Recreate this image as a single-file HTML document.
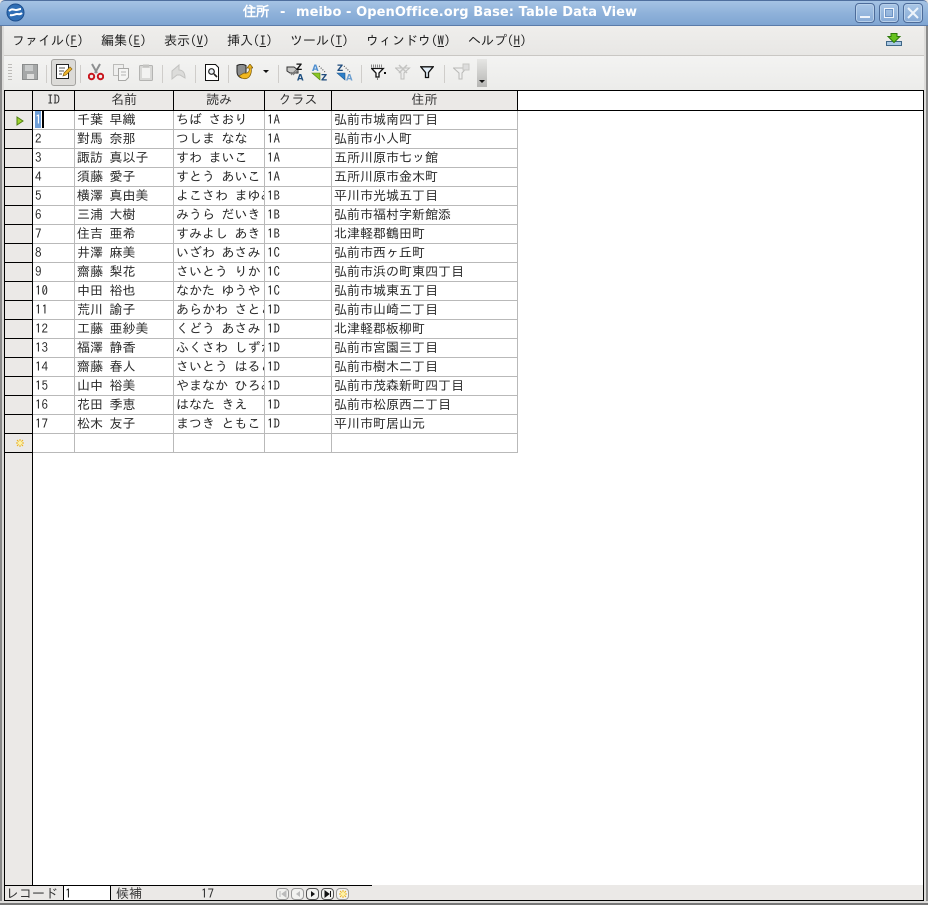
<!DOCTYPE html>
<html lang="ja"><head><meta charset="utf-8"><title>住所 - meibo</title>
<style>
html,body{margin:0;padding:0;width:928px;height:905px;overflow:hidden;background:#ebe9e7}
*{box-sizing:border-box}
body{position:relative;font:13px/19px "IPAGothic","Liberation Mono",monospace;color:#222}
.a{position:absolute}
#tb{left:0;top:0;width:928px;height:26px;background:linear-gradient(#a5c3e4,#8fb2da 50%,#7fa5d2);border-top:1px solid #4f6f9e;border-bottom:1px solid #5a7ba9;border-radius:5px 5px 0 0}
.ti{top:4px;color:#fff;font:bold 13px/17px "DejaVu Sans",sans-serif;white-space:pre;letter-spacing:.08px}
.wb{top:3px;width:20px;height:20px;border:1px solid #4d6c9a;border-radius:4px;background:linear-gradient(#a9c6e6,#86aad6);box-shadow:inset 0 0 0 1px #b8d0ea}
#menu{left:0;top:26px;width:928px;height:30px;background:linear-gradient(#efeeec,#e8e7e5);border-bottom:1px solid #c9c7c4}
.m{top:6px;white-space:pre;color:#222;line-height:18px}
.m u{text-decoration:underline;text-underline-offset:1px}
#tool{left:0;top:56px;width:928px;height:34px;background:linear-gradient(#f3f3f2,#ececea)}
.sep{top:9px;width:1px;height:18px;background:#cfcdca}
#grid{left:4px;top:90px;width:920px;height:811px;border:1px solid #000;background:#fff}
.h{top:91px;height:20px;background:#ebe9e7;border-right:1px solid #000;border-bottom:1px solid #000;text-align:center;line-height:18px;color:#333}
.rh{left:5px;width:28px;height:19px;background:#ebe9e7;border-right:1px solid #000;border-bottom:1px solid #000}
.c{height:19px;border-right:1px solid #b9b9b9;border-bottom:1px solid #b9b9b9;overflow:hidden;white-space:pre;padding-left:2px;line-height:18px;color:#2a2a2a}
.x1{left:33px;width:42px}.x2{left:75px;width:99px}.x3{left:174px;width:91px}.x4{left:265px;width:67px}.x5{left:332px;width:186px}
#sb{left:5px;top:885px;width:918px;height:15px;background:#ebe9e7}
.nb{top:888px;width:13px;height:12px;border:1px solid #9a9a9a;border-radius:4px;background:#f2f2f0}
</style></head><body>

<div class="a" id="tb"></div>
<svg class="a" style="left:6px;top:3px" width="19" height="19" viewBox="0 0 19 19"><circle cx="9.500" cy="9.500" r="8.500" fill="#2f6eb5" stroke="#1d4f8e"/><path d="M3 8c3-3 5-1 7-1s3-1 5-1M4 12c3 1 5-1 7-1s3 1 5-1" stroke="#fff" stroke-width="2" fill="none"/></svg>
<div class="a ti" style="left:243px">住所</div>
<div class="a ti" style="left:280px">-</div>
<div class="a ti" style="left:296px">meibo - OpenOffice.org Base: Table Data View</div>
<div class="a wb" style="left:855px"><div class="a" style="left:4px;top:12px;width:10px;height:2px;background:#eef4fb"></div></div>
<div class="a wb" style="left:879px"><div class="a" style="left:4px;top:4px;width:10px;height:10px;border:1px solid #eef4fb;box-shadow:inset 0 0 0 1px #6d93c4"></div></div>
<div class="a wb" style="left:903px"><svg class="a" style="left:3px;top:3px" width="12" height="12"><path d="M1 1l10 10M11 1L1 11" stroke="#eef4fb" stroke-width="2"/></svg></div>

<div class="a" id="menu"></div>
<div class="a m" style="left:12px;top:32px">ファイル(<u>F</u>)</div>
<div class="a m" style="left:101px;top:32px">編集(<u>E</u>)</div>
<div class="a m" style="left:164px;top:32px">表示(<u>V</u>)</div>
<div class="a m" style="left:227px;top:32px">挿入(<u>I</u>)</div>
<div class="a m" style="left:290px;top:32px">ツール(<u>T</u>)</div>
<div class="a m" style="left:366px;top:32px">ウィンドウ(<u>W</u>)</div>
<div class="a m" style="left:468px;top:32px">ヘルプ(<u>H</u>)</div>
<svg class="a" style="left:886px;top:33px" width="17" height="14" viewBox="0 0 17 14"><rect x="0.500" y="8.500" width="15" height="4" fill="#a9c8e4" stroke="#3f6686"/><path d="M5 0.500h6v3h3l-6 6-6-6h3z" fill="#66c21e" stroke="#2f7a0c"/></svg>

<div class="a" id="tool"></div>
<div class="a" style="left:8px;top:64px;width:4px;height:18px;background:repeating-linear-gradient(#bdbbb8 0 1px,transparent 1px 3px)"></div>
<svg class="a" style="left:22px;top:64px" width="16" height="17" viewBox="0 0 16 17"><rect x="0.500" y="0.500" width="15" height="15" fill="#a6a8a8" stroke="#8a8c8c"/><rect x="3" y="1" width="8" height="6" fill="#c9cbcb"/><rect x="5" y="10" width="7" height="5" fill="#dededd"/></svg>
<div class="a sep" style="left:46px;top:65px"></div>
<div class="a" style="left:51px;top:59px;width:25px;height:27px;border:1px solid #a4a3a0;border-radius:3px;background:#dcdbd8"></div>
<svg class="a" style="left:55px;top:63px" width="18" height="18" viewBox="0 0 18 18"><rect x="1.500" y="1.500" width="12" height="14" fill="#fff" stroke="#222"/><path d="M4 5h6M4 8h5M4 11h3" stroke="#555"/><path d="M8 13l1-3 6-6 2 2-6 6z" fill="#f0b62c" stroke="#8a6410" stroke-width=".7"/></svg>
<div class="a sep" style="left:80px;top:65px"></div>
<svg class="a" style="left:88px;top:63px" width="16" height="18" viewBox="0 0 16 18"><path d="M4 1l5 9M12 1L7 10" stroke="#8d8f90" stroke-width="2"/><circle cx="3.500" cy="13.500" r="2.700" fill="none" stroke="#c8161d" stroke-width="2"/><circle cx="12.500" cy="13.500" r="2.700" fill="none" stroke="#c8161d" stroke-width="2"/></svg>
<svg class="a" style="left:113px;top:64px" width="17" height="17" viewBox="0 0 17 17"><rect x="0.500" y="0.500" width="10" height="11" fill="#efefee" stroke="#bcbcba"/><path d="M5.500 4.500h10v9l-3 3h-7z" fill="#f5f5f4" stroke="#a8a8a6"/><path d="M8 8h5M8 11h5" stroke="#b5b5b3"/></svg>
<svg class="a" style="left:139px;top:64px" width="14" height="17" viewBox="0 0 14 17"><rect x="0.500" y="1.500" width="13" height="15" rx="1" fill="#d8d8d6" stroke="#b4b4b2"/><rect x="3" y="4" width="8" height="10" fill="#f2f2f1"/><rect x="4" y="0.500" width="6" height="3" fill="#c4c4c2"/></svg>
<div class="a sep" style="left:162px;top:65px"></div>
<svg class="a" style="left:170px;top:64px" width="17" height="17" viewBox="0 0 17 17"><path d="M9 1L2 7v8l5-4h3l5 3c0-6-3-8-6-8z" fill="#dcdcda" stroke="#c2c2c0"/></svg>
<div class="a sep" style="left:195px;top:65px"></div>
<svg class="a" style="left:205px;top:64px" width="14" height="17" viewBox="0 0 14 17"><path d="M0.500 0.500h10l3 3v13H0.500z" fill="#fff" stroke="#111"/><circle cx="6.500" cy="7.500" r="2.800" fill="#e8eef4" stroke="#222" stroke-width="1.200"/><path d="M9 10l3 3" stroke="#222" stroke-width="1.600"/></svg>
<div class="a sep" style="left:228px;top:65px"></div>
<svg class="a" style="left:236px;top:64px" width="17" height="16" viewBox="0 0 17 16"><path d="M1 1.500C4 0 7 0 10 1.500V8c0 3-2 5-4.500 6C3 13 1 11 1 8z" fill="#8b8d8e" stroke="#222"/><path d="M3 12c4 4 8 3 10 1s3-6 2-9l2 0-3-4-3 4h2c1 3-1 6-5 5z" fill="#f0b71f" stroke="#7d5b08" stroke-width=".7"/></svg>
<svg class="a" style="left:263px;top:70px" width="6" height="3"><path d="M0 0h6L3 3z" fill="#111"/></svg>
<div class="a sep" style="left:278px;top:65px"></div>
<svg class="a" style="left:286px;top:63px" width="18" height="18" viewBox="0 0 18 18"><path d="M1 4h7l4 3v3H4L1 8z" fill="#c7c7c5" stroke="#333"/><path d="M5 12l6-6M7 12l5-5" stroke="#777"/><text x="10" y="7" font-family="DejaVu Sans" font-weight="bold" font-size="8.500" fill="#111">Z</text><text x="11" y="17.500" font-family="DejaVu Sans" font-weight="bold" font-size="8.500" fill="#1f4f80">A</text></svg>
<svg class="a" style="left:311px;top:63px" width="18" height="18" viewBox="0 0 18 18"><text x="1" y="8" font-family="DejaVu Sans" font-weight="bold" font-size="8.500" fill="#4f8fd0">A</text><path d="M1 10l8 7V10z" fill="#8bc726" stroke="#4d7f10" stroke-width=".6"/><path d="M8 3l6 6" stroke="#444" stroke-dasharray="1 1.500"/><text x="10" y="17.500" font-family="DejaVu Sans" font-weight="bold" font-size="8.500" fill="#1f4b7c">Z</text></svg>
<svg class="a" style="left:336px;top:63px" width="18" height="18" viewBox="0 0 18 18"><text x="1" y="8" font-family="DejaVu Sans" font-weight="bold" font-size="8.500" fill="#1f4b7c">Z</text><path d="M1 10l8 7V10z" fill="#2d7fc9" stroke="#1a558c" stroke-width=".6"/><path d="M8 3l6 6" stroke="#444" stroke-dasharray="1 1.500"/><text x="10" y="17.500" font-family="DejaVu Sans" font-weight="bold" font-size="8.500" fill="#6c9fd0">A</text></svg>
<div class="a sep" style="left:361px;top:65px"></div>
<svg class="a" style="left:371px;top:63px" width="15" height="17" viewBox="0 0 15 17"><path d="M0 3h12" stroke="#888" stroke-width="3" stroke-dasharray="1 1"/><path d="M0.700 5.500h11.600L8 10v4H5v-4z" fill="#fff" stroke="#111" stroke-width="1.300"/><path d="M6 16h1" stroke="#111"/><rect x="13" y="9" width="2" height="2" fill="#111"/></svg>
<svg class="a" style="left:395px;top:63px" width="16" height="18" viewBox="0 0 16 18"><path d="M0.500 5h14L9 10v6H6v-6z" fill="#ededec" stroke="#bdbdbb"/><path d="M4 2l8 8M12 2L4 10" stroke="#c4c4c2" stroke-width="1.500"/></svg>
<svg class="a" style="left:420px;top:66px" width="14" height="13" viewBox="0 0 14 13"><path d="M0.800 0.800h12.400L8.500 6.500v5h-3v-5z" fill="#e4eff8" stroke="#111" stroke-width="1.300"/></svg>
<div class="a sep" style="left:444px;top:65px"></div>
<svg class="a" style="left:453px;top:63px" width="17" height="18" viewBox="0 0 17 18"><path d="M0.500 5h13L9 10v6H6v-6z" fill="#f0f0ef" stroke="#b9b9b7"/><rect x="10" y="1" width="6" height="6" fill="#ddd" stroke="#c6c6c4"/></svg>
<div class="a" style="left:477px;top:59px;width:10px;height:28px;background:linear-gradient(#e6e6e4,#b6b6b4)"></div>
<svg class="a" style="left:479px;top:80px" width="6" height="3"><path d="M0 0h6L3 3z" fill="#111"/></svg>

<div class="a" id="grid"></div>
<div class="a h" style="left:5px;width:28px"></div>
<div class="a h x1">ID</div><div class="a h x2">名前</div><div class="a h x3">読み</div><div class="a h x4">クラス</div><div class="a h x5">住所</div>
<div class="a" style="left:518px;top:110px;width:405px;height:1px;background:#000"></div>
<div class="a" style="left:32px;top:111px;width:1px;height:774px;background:#000"></div>
<div class="a" style="left:5px;top:453px;width:27px;height:432px;background:#ebe9e7"></div>

<div class="a rh" style="top:111px"></div><div class="a rh" style="top:130px"></div><div class="a rh" style="top:149px"></div><div class="a rh" style="top:168px"></div><div class="a rh" style="top:187px"></div><div class="a rh" style="top:206px"></div><div class="a rh" style="top:225px"></div><div class="a rh" style="top:244px"></div><div class="a rh" style="top:263px"></div><div class="a rh" style="top:282px"></div><div class="a rh" style="top:301px"></div><div class="a rh" style="top:320px"></div><div class="a rh" style="top:339px"></div><div class="a rh" style="top:358px"></div><div class="a rh" style="top:377px"></div><div class="a rh" style="top:396px"></div><div class="a rh" style="top:415px"></div><div class="a rh" style="top:434px"></div>
<svg class="a" style="left:16px;top:116px" width="8" height="10"><path d="M1 1l6 4-6 4z" fill="#9fd42e" stroke="#4f7f10"/></svg>
<svg class="a" style="left:16px;top:439px" width="8" height="8" viewBox="0 0 8 8"><path d="M4 0v8M0 4h8M1 1l6 6M7 1L1 7" stroke="#eeb211"/><circle cx="4" cy="4" r="2" fill="#fff3a0"/></svg>

<div class="a c x1" style="top:111px"><span style="background:#6f9fd8;color:#fff;display:inline-block;width:6px;height:17px">1</span><span style="display:inline-block;width:2px;height:17px;background:#000;vertical-align:top;margin-left:1px"></span></div><div class="a c x2" style="top:111px">千葉 早織</div><div class="a c x3" style="top:111px">ちば さおり</div><div class="a c x4" style="top:111px">1A</div><div class="a c x5" style="top:111px">弘前市城南四丁目</div>
<div class="a c x1" style="top:130px">2</div><div class="a c x2" style="top:130px">對馬 奈那</div><div class="a c x3" style="top:130px">つしま なな</div><div class="a c x4" style="top:130px">1A</div><div class="a c x5" style="top:130px">弘前市小人町</div>
<div class="a c x1" style="top:149px">3</div><div class="a c x2" style="top:149px">諏訪 真以子</div><div class="a c x3" style="top:149px">すわ まいこ</div><div class="a c x4" style="top:149px">1A</div><div class="a c x5" style="top:149px">五所川原市七ッ館</div>
<div class="a c x1" style="top:168px">4</div><div class="a c x2" style="top:168px">須藤 愛子</div><div class="a c x3" style="top:168px">すとう あいこ</div><div class="a c x4" style="top:168px">1A</div><div class="a c x5" style="top:168px">五所川原市金木町</div>
<div class="a c x1" style="top:187px">5</div><div class="a c x2" style="top:187px">横澤 真由美</div><div class="a c x3" style="top:187px">よこさわ まゆみ</div><div class="a c x4" style="top:187px">1B</div><div class="a c x5" style="top:187px">平川市光城五丁目</div>
<div class="a c x1" style="top:206px">6</div><div class="a c x2" style="top:206px">三浦 大樹</div><div class="a c x3" style="top:206px">みうら だいき</div><div class="a c x4" style="top:206px">1B</div><div class="a c x5" style="top:206px">弘前市福村字新館添</div>
<div class="a c x1" style="top:225px">7</div><div class="a c x2" style="top:225px">住吉 亜希</div><div class="a c x3" style="top:225px">すみよし あき</div><div class="a c x4" style="top:225px">1B</div><div class="a c x5" style="top:225px">北津軽郡鶴田町</div>
<div class="a c x1" style="top:244px">8</div><div class="a c x2" style="top:244px">井澤 麻美</div><div class="a c x3" style="top:244px">いざわ あさみ</div><div class="a c x4" style="top:244px">1C</div><div class="a c x5" style="top:244px">弘前市西ヶ丘町</div>
<div class="a c x1" style="top:263px">9</div><div class="a c x2" style="top:263px">齋藤 梨花</div><div class="a c x3" style="top:263px">さいとう りか</div><div class="a c x4" style="top:263px">1C</div><div class="a c x5" style="top:263px">弘前市浜の町東四丁目</div>
<div class="a c x1" style="top:282px">10</div><div class="a c x2" style="top:282px">中田 裕也</div><div class="a c x3" style="top:282px">なかた ゆうや</div><div class="a c x4" style="top:282px">1C</div><div class="a c x5" style="top:282px">弘前市城東五丁目</div>
<div class="a c x1" style="top:301px">11</div><div class="a c x2" style="top:301px">荒川 諭子</div><div class="a c x3" style="top:301px">あらかわ さとこ</div><div class="a c x4" style="top:301px">1D</div><div class="a c x5" style="top:301px">弘前市山崎二丁目</div>
<div class="a c x1" style="top:320px">12</div><div class="a c x2" style="top:320px">工藤 亜紗美</div><div class="a c x3" style="top:320px">くどう あさみ</div><div class="a c x4" style="top:320px">1D</div><div class="a c x5" style="top:320px">北津軽郡板柳町</div>
<div class="a c x1" style="top:339px">13</div><div class="a c x2" style="top:339px">福澤 静香</div><div class="a c x3" style="top:339px">ふくさわ しずか</div><div class="a c x4" style="top:339px">1D</div><div class="a c x5" style="top:339px">弘前市宮園三丁目</div>
<div class="a c x1" style="top:358px">14</div><div class="a c x2" style="top:358px">齋藤 春人</div><div class="a c x3" style="top:358px">さいとう はると</div><div class="a c x4" style="top:358px">1D</div><div class="a c x5" style="top:358px">弘前市樹木二丁目</div>
<div class="a c x1" style="top:377px">15</div><div class="a c x2" style="top:377px">山中 裕美</div><div class="a c x3" style="top:377px">やまなか ひろみ</div><div class="a c x4" style="top:377px">1D</div><div class="a c x5" style="top:377px">弘前市茂森新町四丁目</div>
<div class="a c x1" style="top:396px">16</div><div class="a c x2" style="top:396px">花田 季恵</div><div class="a c x3" style="top:396px">はなた きえ</div><div class="a c x4" style="top:396px">1D</div><div class="a c x5" style="top:396px">弘前市松原西二丁目</div>
<div class="a c x1" style="top:415px">17</div><div class="a c x2" style="top:415px">松木 友子</div><div class="a c x3" style="top:415px">まつき ともこ</div><div class="a c x4" style="top:415px">1D</div><div class="a c x5" style="top:415px">平川市町居山元</div>
<div class="a c x1" style="top:434px"></div><div class="a c x2" style="top:434px"></div><div class="a c x3" style="top:434px"></div><div class="a c x4" style="top:434px"></div><div class="a c x5" style="top:434px"></div>

<div class="a" id="sb"></div>
<div class="a" style="left:5px;top:885px;width:367px;height:1px;background:#000"></div>
<div class="a" style="left:6px;top:885px;line-height:17px;color:#333">レコード</div>
<div class="a" style="left:63px;top:886px;width:48px;height:14px;background:#fff;border-left:1px solid #000;border-right:1px solid #000;line-height:15px;padding-left:1px">1</div>
<div class="a" style="left:116px;top:885px;line-height:17px;color:#333">候補</div>
<div class="a" style="left:201px;top:885px;line-height:17px;color:#333">17</div>
<div class="a nb" style="left:276px"><svg class="a" style="left:2px;top:1px" width="8" height="8"><path d="M1 1v6M7 1L3 4l4 3z" stroke="#bbb" fill="#bbb"/></svg></div>
<div class="a nb" style="left:291px"><svg class="a" style="left:2px;top:1px" width="8" height="8"><path d="M6 1L2 4l4 3z" fill="#bbb"/></svg></div>
<div class="a nb" style="left:306px;border-color:#555"><svg class="a" style="left:2px;top:1px" width="8" height="8"><path d="M2 1l4 3-4 3z" fill="#111"/></svg></div>
<div class="a nb" style="left:321px;border-color:#555"><svg class="a" style="left:2px;top:1px" width="8" height="8"><path d="M1 1l4 3-4 3zM6.500 1v6" fill="#111" stroke="#111"/></svg></div>
<div class="a nb" style="left:336px"><svg class="a" style="left:2px;top:1px" width="8" height="8" viewBox="0 0 8 8"><path d="M4 0v8M0 4h8M1 1l6 6M7 1L1 7" stroke="#eeb211"/><circle cx="4" cy="4" r="2" fill="#fff3a0"/></svg></div>

<div class="a" style="left:0;top:26px;width:4px;height:879px;background:#dcdbd9;border-left:2px solid #8a8a8a"></div>
<div class="a" style="left:924px;top:26px;width:4px;height:879px;background:#dcdbd9;border-right:2px solid #8a8a8a"></div>
<div class="a" style="left:0;top:901px;width:928px;height:4px;background:#dcdbd9;border-bottom:2px solid #777"></div>
</body></html>
